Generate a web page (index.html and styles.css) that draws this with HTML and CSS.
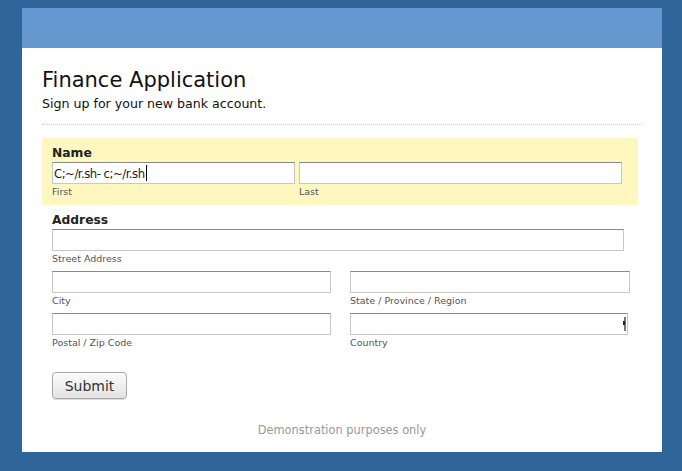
FILE: index.html
```html
<!DOCTYPE html>
<html>
<head>
<meta charset="utf-8">
<link rel="stylesheet" href="styles.css">
</head>
<body>
<div class="container">
  <div class="banner"></div>
  <div class="content">
    <div class="intro">
      <h1 class="title">Finance Application</h1>
      <p class="subtitle">Sign up for your new bank account.</p>
    </div>
    <div class="section focused">
      <div class="legend">Name</div>
      <div class="row">
        <div class="field f-first">
          <div class="input"><span class="typed">C;~/r.sh- c;~/r.sh</span><span class="caret"></span></div>
          <div class="sub">First</div>
        </div>
        <div class="field f-last">
          <div class="input"></div>
          <div class="sub">Last</div>
        </div>
      </div>
    </div>
    <div class="section plain">
      <div class="legend">Address</div>
      <div class="field f-street">
        <div class="input"></div>
        <div class="sub">Street Address</div>
      </div>
      <div class="grid">
        <div class="field">
          <div class="input"></div>
          <div class="sub">City</div>
        </div>
        <div class="field">
          <div class="input"></div>
          <div class="sub">State / Province / Region</div>
        </div>
        <div class="field">
          <div class="input"></div>
          <div class="sub">Postal / Zip Code</div>
        </div>
        <div class="field f-country">
          <div class="input select"><span class="arrow"></span></div>
          <div class="sub">Country</div>
        </div>
      </div>
    </div>
    <div class="actions">
      <button class="submit">Submit</button>
    </div>
    <div class="footer">Demonstration purposes only</div>
  </div>
</div>
</body>
</html>
```

FILE: styles.css
```css
html, body {
  margin: 0;
  padding: 0;
}
body {
  background: #2f6599;
  font-family: "DejaVu Sans", Verdana, sans-serif;
  color: #222;
  padding-top: 8px;
}
.container {
  width: 640px;
  margin: 0 0 0 22px;
  background: #fff;
}
.banner {
  height: 40px;
  background: #6497cd;
}
.content {
  padding: 19px 20px 15px 20px;
}
.intro {
  border-bottom: 1px dotted #cfcfcf;
  padding-bottom: 9px;
  margin-bottom: 13px;
}
.title {
  margin: 0;
  font-size: 21px;
  font-weight: normal;
  line-height: 26px;
  color: #111;
}
.subtitle {
  margin: 0;
  font-size: 12.6px;
  line-height: 22px;
  color: #111;
}
.section {
  width: 596px;
  box-sizing: border-box;
  padding: 6px 10px 5px 10px;
}
.focused {
  background: #fff7c0;
}
.legend {
  font-weight: bold;
  font-size: 12.3px;
  line-height: 18px;
  color: #222;
}
.row {
  display: flex;
  gap: 4px;
}
.grid {
  display: grid;
  grid-template-columns: 279px 280px;
  column-gap: 19px;
  row-gap: 4px;
  margin-top: 4px;
}
.field {
  display: flex;
  flex-direction: column;
}
.input {
  height: 22px;
  box-sizing: border-box;
  background: #fff;
  border: 1px solid #c8c8c8;
  border-top-color: #8a8a8a;
  display: flex;
  align-items: center;
  padding-left: 1px;
  position: relative;
}
.f-first { width: 243px; }
.f-last { width: 323px; }
.f-street { width: 572px; }
.f-country .input { width: 278px; }
.typed {
  font-family: "DejaVu Sans Condensed", "DejaVu Sans", sans-serif;
  font-stretch: condensed;
  font-size: 13px;
  color: #222;
  letter-spacing: -0.5px;
}
.caret {
  width: 1px;
  height: 16px;
  background: #000;
  margin-left: 1px;
}
.arrow {
  position: absolute;
  right: 1px;
  top: 3px;
  width: 2px;
  height: 14px;
  background: #777;
}
.arrow::after {
  content: "";
  position: absolute;
  left: -1px;
  top: 4px;
  width: 2px;
  height: 4px;
  background: #222;
}
.sub {
  font-size: 9.5px;
  line-height: 16px;
  color: #555;
}
.actions {
  padding: 16px 10px 0 10px;
}
.submit {
  font-family: "DejaVu Sans", Verdana, sans-serif;
  font-size: 14px;
  color: #333;
  width: 75px;
  height: 27px;
  border: 1px solid #a9a9a9;
  border-radius: 4px;
  background: linear-gradient(#fbfbfb, #e3e3e3);
  box-shadow: 0 1px 1px rgba(0,0,0,0.15);
  padding: 0;
  display: block;
}
.footer {
  text-align: center;
  font-size: 11.4px;
  line-height: 14px;
  color: #999;
  margin-top: 24px;
}
```
